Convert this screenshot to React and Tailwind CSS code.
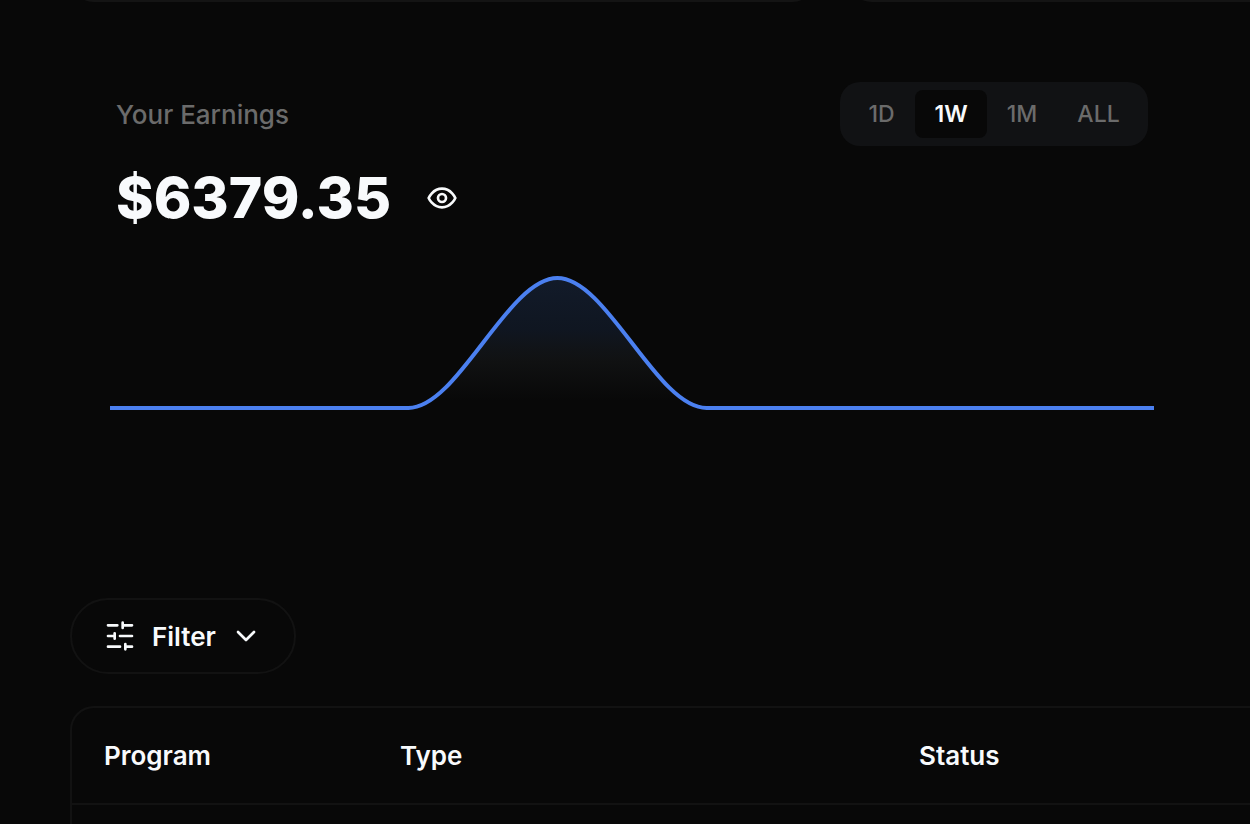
import { useState } from "react";

const ranges = [
  { label: "1D", width: "w-[67px]" },
  { label: "1W", width: "w-[72px]" },
  { label: "1M", width: "w-[70px]" },
  { label: "ALL", width: "w-[83px]" },
];

function Stroke({ className = "", width = 2, children }) {
  return (
    <svg
      viewBox="0 0 24 24"
      aria-hidden="true"
      fill="none"
      stroke="currentColor"
      strokeWidth={width}
      strokeLinecap="round"
      strokeLinejoin="round"
      className={`size-8 shrink-0 ${className}`}
    >
      {children}
    </svg>
  );
}

function RangePicker() {
  const [active, setActive] = useState("1W");
  return (
    <div className="flex rounded-[20px] bg-[#111214] p-2" role="group" aria-label="Range">
      {ranges.map(({ label, width }) => (
        <button
          key={label}
          type="button"
          aria-pressed={active === label}
          onClick={() => setActive(label)}
          className={`h-12 rounded-lg text-[23px] ${width} ${
            active === label
              ? "bg-[#080808] font-semibold text-slate-50"
              : "font-medium text-[#6b6b6b]"
          }`}
        >
          {label}
        </button>
      ))}
    </div>
  );
}

function EarningsChart() {
  const curve =
    "M0 136H298.3C348 136 397.7 6 447.4 6C497.1 6 546.9 136 596.6 136H1044";
  return (
    <svg
      viewBox="0 0 1044 140"
      preserveAspectRatio="none"
      className="block h-[140px] w-full"
      role="img"
      aria-label="Earnings over time"
    >
      <defs>
        <linearGradient id="fill" x1="0" y1="0" x2="0" y2="1">
          <stop offset="0" stopColor="#4b86ea" stopOpacity="0.15" />
          <stop offset="0.4" stopColor="#4b86ea" stopOpacity="0.11" />
          <stop offset="0.65" stopColor="#8fa0ae" stopOpacity="0.06" />
          <stop offset="0.95" stopColor="#8fa0ae" stopOpacity="0" />
        </linearGradient>
      </defs>
      <path d={`${curve}Z`} fill="url(#fill)" />
      <path d={curve} fill="none" stroke="#4b80f0" strokeWidth="4" />
    </svg>
  );
}

export default function App() {
  return (
    <div className="flex min-h-screen flex-col overflow-hidden bg-[#080808] pl-[70px] font-['Inter',sans-serif] text-slate-50">
      <div className="flex h-[2px] items-end gap-8 overflow-hidden">
        <div className="h-16 w-[746px] shrink-0 rounded-3xl border-2 border-[#141414]" />
        <div className="h-16 flex-1 rounded-bl-3xl border-b-2 border-l-2 border-[#141414]" />
      </div>

      <section className="mt-20 pr-24 pl-10">
        <div className="flex items-start justify-between pr-[6px] pl-[6px]">
          <div>
            <h2 className="pt-3 text-[26px] leading-[42px] font-medium text-[#6b6b6b]">
              Your Earnings
            </h2>
            <div className="mt-[22px] flex items-center gap-[35px]">
              <p className="text-[57px] leading-[80px] font-extrabold">$6379.35</p>
              <button type="button" aria-label="Hide earnings">
                <Stroke>
                  <path d="M2 12s3-7 10-7 10 7 10 7-3 7-10 7-10-7-10-7Z" />
                  <circle cx="12" cy="12" r="3" />
                </Stroke>
              </button>
            </div>
          </div>
          <RangePicker />
        </div>
        <div className="mt-[34px]">
          <EarningsChart />
        </div>
      </section>

      <button
        type="button"
        className="mt-[186px] flex h-19 w-[226px] items-center rounded-full border-2 border-[#121212] pl-8 text-[26px] font-semibold"
      >
        <Stroke>
          <path d="M21 4h-7M10 4H3M21 12h-9M8 12H3M21 20h-5M12 20H3M14 2v4M8 10v4M16 18v4" />
        </Stroke>
        <span className="ml-4">Filter</span>
        <Stroke className="ml-3.5">
          <path d="m6 9 6 6 6-6" />
        </Stroke>
      </button>

      <div className="mt-8 flex-1 rounded-tl-3xl border-t-2 border-l-2 border-[#121212]">
        <table className="w-full table-fixed text-left text-[26px]">
          <thead>
            <tr className="h-24 border-b-2 border-[#121212]">
              <th className="w-[296px] px-8 font-semibold">Program</th>
              <th className="w-[519px] px-8 font-semibold">Type</th>
              <th className="px-8 font-semibold">Status</th>
            </tr>
          </thead>
        </table>
      </div>
    </div>
  );
}
